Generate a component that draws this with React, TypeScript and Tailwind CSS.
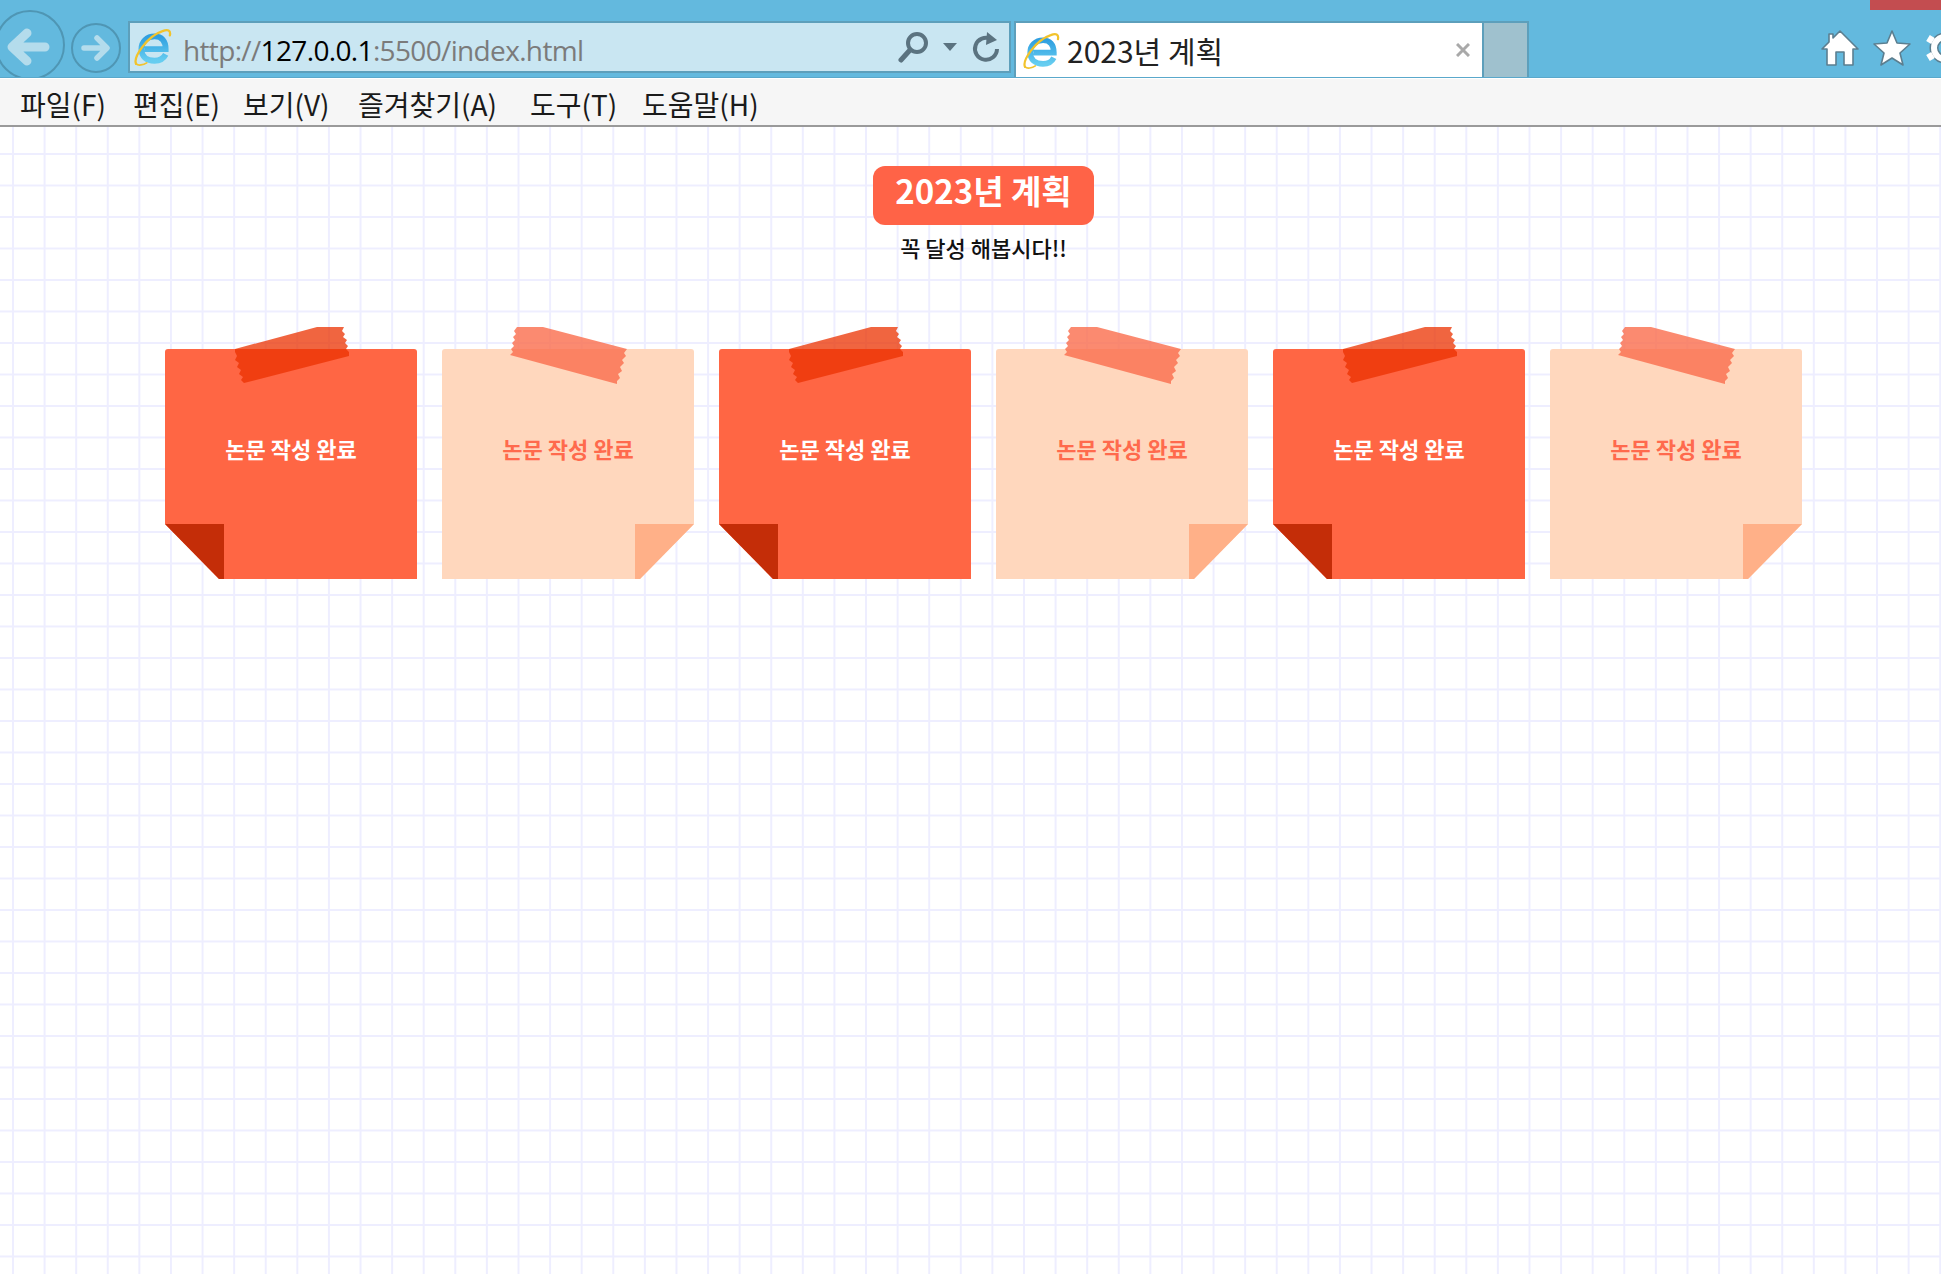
const CJK = "font-['Noto_Sans_CJK_KR','Noto_Sans',sans-serif]";

const MENU = [
  { label: "파일(F)", w: "w-[113px]" },
  { label: "편집(E)", w: "w-[110px]" },
  { label: "보기(V)", w: "w-[115px]" },
  { label: "즐겨찾기(A)", w: "w-[172px]" },
  { label: "도구(T)", w: "w-[112px]" },
  { label: "도움말(H)", w: "w-[130px]" },
];

function IeLogo({ className }: { className: string }) {
  return (
    <svg viewBox="0 0 36 36" className={className} fill="none">
      <defs>
        <linearGradient id="ieblue" x1="0" y1="0" x2="0" y2="1">
          <stop offset="0" stopColor="#2f9fe0" />
          <stop offset="1" stopColor="#66cdf0" />
        </linearGradient>
      </defs>
      <path
        d="M10 20 H30 C30 12 26 8 19.5 8 C12 8 7 13 7 20 C7 27 12 31 19.5 31 C24 31 28 29 30 25"
        stroke="url(#ieblue)"
        strokeWidth="5.5"
      />
      <path
        d="M2 34 C-1 28 12 8 27 3 C32 1 35 2 34 7"
        stroke="#f2c32c"
        strokeWidth="2.2"
        strokeLinecap="round"
      />
      <path d="M2 34 C4 36 9 35 12 33" stroke="#f2c32c" strokeWidth="1.6" strokeLinecap="round" />
    </svg>
  );
}

function NavButtons() {
  return (
    <>
      <svg viewBox="0 0 70 70" className="ml-[-5px] mt-[10px] h-[70px] w-[70px] shrink-0" fill="none">
        <circle cx="35" cy="35" r="34" stroke="#4f96b4" strokeWidth="2" />
        <path
          d="M50 37 H19 M32 23 L17 37 L32 51"
          stroke="#b4dcec"
          strokeWidth="9"
          strokeLinecap="round"
          strokeLinejoin="round"
        />
      </svg>
      <svg viewBox="0 0 50 50" className="ml-[6px] mt-[23px] h-[50px] w-[50px] shrink-0" fill="none">
        <circle cx="25" cy="25" r="24" stroke="#4f96b4" strokeWidth="2" />
        <path
          d="M13 25 H34 M26 15 L36 25 L26 35"
          stroke="#b4dcec"
          strokeWidth="5.5"
          strokeLinecap="round"
          strokeLinejoin="round"
        />
      </svg>
    </>
  );
}

function AddressBar() {
  return (
    <div className="ml-[7px] mt-[21px] flex h-[52px] w-[883px] shrink-0 items-center border-2 border-[#5d9fbb] bg-[#c9e6f2]">
      <IeLogo className="ml-[4px] h-[38px] w-[38px] shrink-0" />
      <span className="ml-[11px] mt-[6px] font-['Open_Sans',sans-serif] text-[28px] tracking-[-0.65px] text-[#7b7b7b]">
        http://<span className="text-black">127.0.0.1</span>:5500/index.html
      </span>
      <div className="ml-auto flex items-center">
        <svg viewBox="0 0 32 32" className="h-[32px] w-[32px]" fill="none">
          <circle cx="19" cy="12" r="9" stroke="#5b7380" strokeWidth="4" />
          <path d="M12 19 L3 29" stroke="#5b7380" strokeWidth="5" strokeLinecap="round" />
        </svg>
        <svg viewBox="0 0 14 8" className="ml-[13px] h-[8px] w-[14px]">
          <path d="M0 0 H14 L7 8 Z" fill="#5b7380" />
        </svg>
        <svg viewBox="0 0 30 32" className="ml-[14px] mr-[8px] h-[32px] w-[30px]" fill="none">
          <path d="M20 8 A11 11 0 1 0 26 18" stroke="#5b7380" strokeWidth="4" />
          <path d="M16 1 L26 9 L15 14 Z" fill="#5b7380" />
        </svg>
      </div>
    </div>
  );
}

function TabStrip() {
  return (
    <div className="ml-[3px] mt-[21px] flex h-[56px] shrink-0">
      <div className="flex w-[470px] items-center border-t-2 border-l-2 border-r-2 border-[#5d9fbb] bg-white">
        <IeLogo className="ml-[7px] h-[37px] w-[37px] shrink-0" />
        <span className={`ml-[7px] text-[30px] text-[#222] ${CJK}`}>2023년 계획</span>
        <svg viewBox="0 0 14 14" className="ml-auto mr-[12px] h-[14px] w-[14px]" fill="none">
          <path d="M1 1 L13 13 M13 1 L1 13" stroke="#a9a9a9" strokeWidth="3" />
        </svg>
      </div>
      <div className="w-[45px] border-t-2 border-r-2 border-[#5d9fbb] bg-[#9fc1ce]" />
    </div>
  );
}

function RightIcons() {
  return (
    <div className="ml-auto mt-[29px] flex shrink-0 items-start">
      <svg viewBox="0 0 40 38" className="h-[38px] w-[40px]">
        <path
          d="M20 2 L38 20 H33 V36 H24 V23 H16 V36 H7 V20 H2 L9 13 V5 H13 V9 Z"
          fill="#fff"
          stroke="#5c7f90"
          strokeWidth="1.6"
          strokeLinejoin="round"
        />
      </svg>
      <svg viewBox="0 0 40 38" className="ml-[12px] h-[38px] w-[40px]">
        <path
          d="M20 2 L25 14 L38 15 L28 24 L31 36 L20 29 L9 36 L12 24 L2 15 L15 14 Z"
          fill="#fff"
          stroke="#5c7f90"
          strokeWidth="1.6"
          strokeLinejoin="round"
        />
      </svg>
      <svg viewBox="0 0 40 38" className="ml-[13px] mr-[-24px] h-[38px] w-[40px]" fill="none">
        <circle cx="20" cy="19" r="11" stroke="#5c7f90" strokeWidth="9" />
        <circle cx="20" cy="19" r="11" stroke="#fff" strokeWidth="6" />
        <path
          d="M20 1 V7 M20 31 V37 M3 9 L8 12 M32 26 L37 29 M3 29 L8 26 M32 12 L37 9"
          stroke="#fff"
          strokeWidth="7"
        />
      </svg>
    </div>
  );
}

function Card({ light }: { light: boolean }) {
  return (
    <div className="relative h-[230px] w-[252px] shrink-0">
      {light ? (
        <div className="flex h-full justify-center rounded-t-[3px] bg-[#ffd7bd] pt-[83px] [clip-path:polygon(0_0,100%_0,100%_175px,198px_100%,0_100%)]">
          <span className={`text-[22px] leading-[32px] font-bold text-[#ff6a4d] ${CJK}`}>논문 작성 완료</span>
        </div>
      ) : (
        <div className="flex h-full justify-center rounded-t-[3px] bg-[#ff6644] pt-[83px] [clip-path:polygon(0_0,100%_0,100%_100%,54px_100%,0_175px)]">
          <span className={`text-[22px] leading-[32px] font-bold text-white ${CJK}`}>논문 작성 완료</span>
        </div>
      )}
      <svg viewBox="0 0 252 230" className="absolute inset-0 h-full w-full overflow-visible">
        {light ? (
          <>
            <polygon points="193,175 252,175 198,230 193,230" fill="#ffb088" />
            <polygon
              points="75,-22 101,-22 185,0 182,4 184,7 180,11 182,14 178,18 180,22 176,25 178,29 175,32 175,35 68,6 71,3 69,0 72,-3 70,-6 73,-9 71,-12 74,-15 72,-18"
              fill="#fa6d4c"
              fillOpacity="0.8"
            />
          </>
        ) : (
          <>
            <polygon points="0,175 59,175 59,230 54,230" fill="#c42d08" />
            <polygon
              points="70,0 152,-22 179,-22 177,-18 180,-15 178,-12 182,-9 180,-6 183,-3 181,0 184,3 184,7 79,34 76,31 78,28 74,25 76,21 72,18 74,14 70,11 72,7 70,3"
              fill="#eb3200"
              fillOpacity="0.75"
            />
          </>
        )}
      </svg>
    </div>
  );
}

export default function App() {
  return (
    <div className="flex h-[1274px] w-[1941px] flex-col overflow-hidden bg-white">
      <div className="relative flex h-[78px] shrink-0 overflow-hidden border-b border-[#5aa8cb] bg-[#63b9de]">
        <NavButtons />
        <AddressBar />
        <TabStrip />
        <RightIcons />
        <div className="absolute right-0 top-0 h-[10px] w-[71px] bg-[#c34d50]" />
      </div>

      <div className="flex h-[49px] shrink-0 items-center border-t border-b-2 border-t-white border-b-[#9a9a9a] bg-[#f6f6f6] pl-[20px] pt-[3px]">
        {MENU.map((m) => (
          <span key={m.label} className={`${m.w} shrink-0 text-[28px] text-[#1a1a1a] ${CJK}`}>
            {m.label}
          </span>
        ))}
      </div>

      <main className="flex flex-1 flex-col items-center bg-[linear-gradient(#eeeeff_2px,transparent_2px),linear-gradient(90deg,#eeeeff_2px,transparent_2px)] bg-[size:31.6px_31.5px] bg-[position:12px_26px] pl-[26px]">
        <h1
          className={`mt-[39px] flex h-[59px] w-[221px] items-center justify-center rounded-[12px] bg-[#ff6347] pb-[9px] text-[33px] font-bold text-white ${CJK}`}
        >
          2023년 계획
        </h1>
        <p className={`mt-[6px] text-[22px] leading-[32px] font-medium text-[#111] ${CJK}`}>꼭 달성 해봅시다!!</p>
        <div className="mt-[86px] flex gap-[25px]">
          {[false, true, false, true, false, true].map((light, i) => (
            <Card key={i} light={light} />
          ))}
        </div>
      </main>
    </div>
  );
}
